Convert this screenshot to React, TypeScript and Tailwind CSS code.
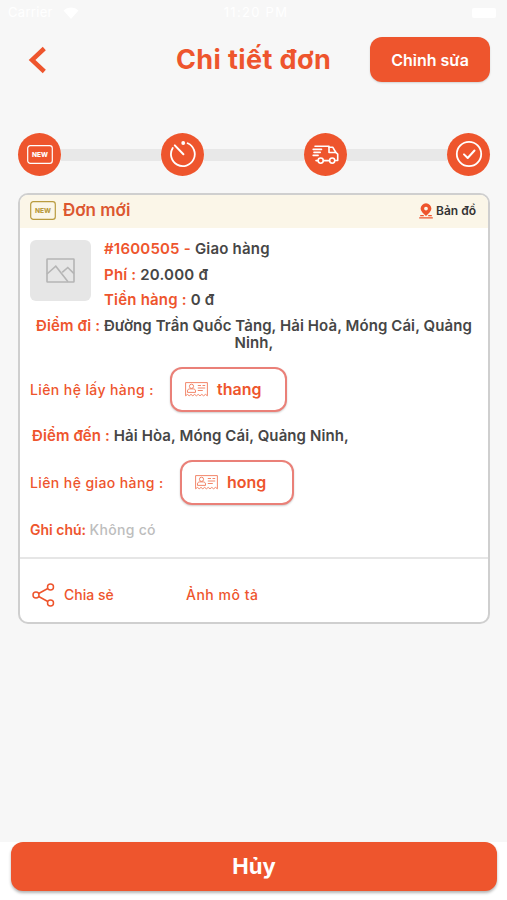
import type { ReactNode } from "react";

function NewIcon({ className }: { className?: string }) {
  return (
    <svg viewBox="0 0 26 19" className={className} fill="none">
      <rect x="0.7" y="0.7" width="24.6" height="17.6" rx="2.6" stroke="currentColor" strokeWidth="1.2" />
      <text
        x="13"
        y="12"
        textAnchor="middle"
        textLength="16"
        lengthAdjust="spacingAndGlyphs"
        fill="currentColor"
        className="font-['Inter',sans-serif] text-[6.8px] font-extrabold"
      >
        NEW
      </text>
    </svg>
  );
}

function TimerIcon() {
  return (
    <svg viewBox="0 0 28 28" className="size-7" fill="none" stroke="currentColor" strokeWidth="1.8" strokeLinecap="round">
      <path d="M18.7 3.3A11.9 11.9 0 1 1 3.7 8" />
      <path d="M5.8 5.4l8.6 8.8" strokeWidth="2" />
      <circle cx="14.2" cy="3" r="1.9" fill="currentColor" stroke="none" />
    </svg>
  );
}

function TruckIcon() {
  return (
    <svg viewBox="0 0 27 19" className="h-[19px] w-[27px]" fill="none" stroke="currentColor" strokeWidth="1.6" strokeLinecap="round" strokeLinejoin="round">
      <path d="M3 1.2h14v6.3h6.9" />
      <path d="M17 2.2h3.7l3.2 5.3 1.8 1.7v6.3h-2.1" />
      <path d="M1.2 4.4h8.3M2 7.4h6.2M1.2 10.4h4.9M4 15.6h1.9M11.5 15.6h5.8" />
      <circle cx="8.7" cy="15.6" r="2.6" />
      <circle cx="20.2" cy="15.6" r="2.6" />
    </svg>
  );
}

function DoneIcon() {
  return (
    <svg viewBox="0 0 28 28" className="size-7" fill="none" stroke="currentColor" strokeWidth="1.8" strokeLinecap="round" strokeLinejoin="round">
      <circle cx="14" cy="14" r="12.2" />
      <path d="M9 14.4l3.7 3.6 6.8-7.5" strokeWidth="2" />
    </svg>
  );
}

function MapPinIcon() {
  return (
    <svg viewBox="0 0 14 16" className="h-4 w-3.5">
      <path
        fillRule="evenodd"
        fill="currentColor"
        d="M7 0.3a5.4 5.4 0 0 1 5.4 5.4c0 2.6-3 4.7-5.4 7.3C4.6 10.4 1.6 8.3 1.6 5.7A5.4 5.4 0 0 1 7 0.3zM7 3.7a1.9 1.9 0 1 0 0 3.8 1.9 1.9 0 0 0 0-3.8z"
      />
      <path d="M1.2 12.6h3.6M9.2 12.6h3.6M0.2 14.8h13.6" stroke="currentColor" strokeWidth="1.3" />
    </svg>
  );
}

function ImageIcon() {
  return (
    <svg viewBox="0 0 29 25" className="h-[25px] w-[29px]" fill="none" stroke="currentColor" strokeWidth="1.6">
      <rect x="1" y="1" width="27" height="23" rx="0.5" />
      <path d="M1 16l8.8-7.8L22 23.8M16.2 14.4l5.6-4.9L28 15.6" />
    </svg>
  );
}

function ContactCardIcon() {
  return (
    <svg viewBox="0 0 23 15" className="h-[15px] w-[23px] text-[#f0795a]" fill="none" stroke="currentColor" strokeWidth="0.9">
      <path d="M0.6 13.8V0.6h21.8v13.2l-1.9-1.4-1.9 1.4-1.8-1.4-1.8 1.4-1.8-1.4-1.8 1.4-1.8-1.4-1.8 1.4L6 12.4l-1.8 1.4-1.8-1.4z" />
      <circle cx="6.5" cy="4.3" r="2.1" />
      <path d="M2.5 10.4V9c0-1.4 1-2.1 2.2-2.1h3.6c1.2 0 2.2 0.7 2.2 2.1v1.4z" />
      <path d="M12.8 3.5h3.2M17.5 3.5h2.7M12.8 6h7.4M12.8 8.5h5" />
    </svg>
  );
}

function ShareIcon() {
  return (
    <svg viewBox="0 0 23 24" className="h-6 w-[23px]" fill="none" stroke="currentColor" strokeWidth="1.5">
      <circle cx="4" cy="12" r="3" />
      <circle cx="18.5" cy="4" r="3" />
      <circle cx="18.5" cy="20" r="3" />
      <path d="M6.7 10.5l9.1-5M6.7 13.5l9.1 5" />
    </svg>
  );
}

const steps: ReactNode[] = [
  <NewIcon key="new" className="h-[19px] w-[26px]" />,
  <TimerIcon key="pending" />,
  <TruckIcon key="shipping" />,
  <DoneIcon key="done" />,
];

function StatusBar() {
  return (
    <div className="grid h-[26px] grid-cols-3 items-center pr-[11px] pl-2 text-[13px] text-white">
      <div className="flex items-center gap-2.5">
        <span className="tracking-[0.3px]">Carrier</span>
        <svg viewBox="0 0 16 12" className="h-3 w-4" fill="currentColor">
          <path d="M8 12L0.5 3.5a11 11 0 0 1 15 0z" />
        </svg>
      </div>
      <span className="pl-2 text-center tracking-[1.3px]">11:20 PM</span>
      <span className="h-2.5 w-6 justify-self-end rounded-[2px] bg-white" />
    </div>
  );
}

function ContactButton({ name, className }: { name: string; className: string }) {
  return (
    <button
      className={`flex h-[45px] items-center gap-[9px] rounded-[12px] border-2 border-[#ea8078] bg-white pl-[13px] text-[16px] font-semibold shadow-[0_1px_2px_rgba(0,0,0,0.2)] ${className}`}
    >
      <ContactCardIcon />
      {name}
    </button>
  );
}

export default function App() {
  return (
    <div className="flex h-[900px] w-[507px] flex-col overflow-hidden bg-[#f7f7f7] font-['Inter',sans-serif] text-[#ee552d]">
      <StatusBar />

      <header className="mx-[17px] mt-[11px] grid h-[45px] grid-cols-[120px_1fr_120px] items-center">
        <svg viewBox="0 0 20 28" className="ml-[10px] h-7 w-5" fill="none" stroke="currentColor" strokeWidth="4.5">
          <path d="M17.3 2.5L5 14l12.3 11.5" />
        </svg>
        <h1 className="pt-px text-center text-[27px] leading-[44px] font-bold tracking-[0.4px]">Chi tiết đơn</h1>
        <button className="h-[45px] w-[120px] rounded-[12px] bg-[#ee552d] text-[16px] font-semibold text-white shadow-[0_1px_2px_rgba(0,0,0,0.15)]">
          Chỉnh sửa
        </button>
      </header>

      <div className="mr-[17px] ml-[18px] mt-[51px] flex h-[43px] items-center">
        {steps.map((icon, i) => (
          <div key={i} className={i === 0 ? "flex items-center" : "flex flex-1 items-center"}>
            {i > 0 && <div className="h-3 flex-1 bg-[#e8e8e8]" />}
            <div className="flex size-[43px] items-center justify-center rounded-full bg-[#ee552d] pb-px text-white">{icon}</div>
          </div>
        ))}
      </div>

      <section className="mr-[17px] ml-[18px] mt-[17px] flex h-[431px] flex-col overflow-hidden rounded-[10px] border-2 border-[#cfcfcf] bg-white">
        <div className="flex h-[33px] shrink-0 items-center bg-[#fbf6e8] pr-[12px] pb-[2px] pl-[10px]">
          <NewIcon className="h-[19px] w-[26px] text-[#b99b3f]" />
          <span className="ml-[7px] flex-1 pt-px text-[17px] font-semibold text-[#dc5730]">Đơn mới</span>
          <MapPinIcon />
          <span className="ml-[3px] text-[12px] font-semibold text-[#333]">Bản đồ</span>
        </div>

        <div className="flex px-[10px] pt-[12px]">
          <div className="flex size-[61px] items-center justify-center rounded-[6px] bg-[#e6e6e6] text-[#b5b5b5]">
            <ImageIcon />
          </div>
          <div className="ml-[13px] -mt-[4px] text-[15px] leading-[25.6px] font-semibold tracking-[0.2px]">
            <p>
              #1600505 - <span className="text-[#464646]">Giao hàng</span>
            </p>
            <p>
              Phí : <span className="text-[#464646]">20.000 đ</span>
            </p>
            <p>
              Tiền hàng : <span className="text-[#464646]">0 đ</span>
            </p>
          </div>
        </div>

        <p className="mt-[4px] px-[8px] text-center text-[15px] leading-[17px] font-semibold tracking-[0.08px]">
          Điểm đi : <span className="text-[#464646]">Đường Trần Quốc Tảng, Hải Hoà, Móng Cái, Quảng Ninh,</span>
        </p>

        <div className="mt-[16px] flex items-center pl-[10px]">
          <span className="w-[140px] text-[14px] font-medium tracking-[0.4px]">Liên hệ lấy hàng :</span>
          <ContactButton name="thang" className="w-[117px]" />
        </div>

        <p className="mt-[15px] pl-[12px] text-[15px] leading-[18px] font-semibold tracking-[0.1px]">
          Điểm đến : <span className="text-[#464646]">Hải Hòa, Móng Cái, Quảng Ninh,</span>
        </p>

        <div className="mt-[15px] flex items-center pl-[10px]">
          <span className="w-[150px] text-[14px] font-medium tracking-[0.4px]">Liên hệ giao hàng :</span>
          <ContactButton name="hong" className="w-[114px]" />
        </div>

        <p className="mt-[15px] pl-[10px] text-[14px] leading-5 font-semibold">
          Ghi chú: <span className="font-medium tracking-[0.3px] text-[#bdbdbd]">Không có</span>
        </p>

        <div className="mt-[17px] flex flex-1 items-center border-t-2 border-[#e6e6e6] pl-[12px] pt-[9px] text-[14px] font-medium">
          <button className="flex w-[154px] items-center gap-[9px]">
            <ShareIcon />
            Chia sẻ
          </button>
          <button className="tracking-[0.5px]">Ảnh mô tả</button>
        </div>
      </section>

      <footer className="mt-auto h-[58px] bg-white pr-[10px] pl-[11px]">
        <button className="h-[49px] w-full rounded-[12px] bg-[#ee552d] text-[22px] font-bold text-white shadow-[0_2px_3px_rgba(0,0,0,0.3)]">Hủy</button>
      </footer>
    </div>
  );
}
